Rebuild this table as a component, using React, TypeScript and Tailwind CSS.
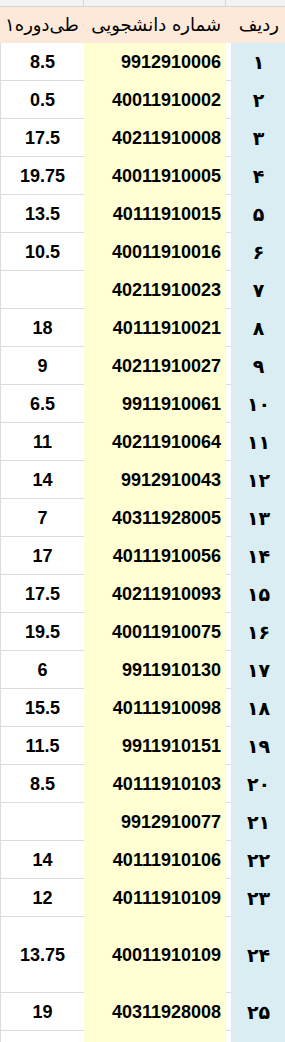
import React from "react";

const scores = ["8.5","0.5","17.5","19.75","13.5","10.5","","18","9","6.5","11","14","7","17","17.5","19.5","6","15.5","11.5","8.5","","14","12","13.75","19"];
const ids = ["9912910006","40011910002","40211910008","40011910005","40111910015","40011910016","40211910023","40111910021","40211910027","9911910061","40211910064","9912910043","40311928005","40111910056","40211910093","40011910075","9911910130","40111910098","9911910151","40111910103","9912910077","40111910106","40111910109","40011910109","40311928008"];
const fa = (n: number) => String(n).replace(/\d/g, (d) => "۰۱۲۳۴۵۶۷۸۹"[Number(d)]);

export default function App() {
  return (
    <div className="w-[285px] h-[1042px] overflow-hidden bg-white text-black" style={{ fontFamily: '"Liberation Sans", Arial, sans-serif' }}>
      {/* top strip */}
      <div className="grid grid-cols-[84px_142px_5px_54px] h-[7px] bg-[#f3f3f3] border-b border-[#d4d4d4]">
        <div className="border-r border-[#d4d4d4]" />
        <div className="border-r border-[#d4d4d4]" />
        <div />
        <div />
      </div>
      {/* header */}
      <div className="grid grid-cols-[84px_142px_5px_54px] h-[36px] bg-[#fce9da] text-[18px] leading-none" style={{ fontFamily: '"DejaVu Sans", sans-serif' }}>
        <div className="flex items-center justify-center" dir="rtl">طی‌دوره۱</div>
        <div className="flex items-center justify-end pr-[5px]" dir="ltr"><span dir="rtl">شماره دانشجویی</span></div>
        <div />
        <div className="flex items-center justify-end pr-[6px]" dir="ltr"><span dir="rtl">ردیف</span></div>
      </div>
      {ids.map((id, i) => {
        const h = i === 23 ? "h-[76px]" : "h-[38px]";
        return (
          <div key={i} className={`grid grid-cols-[84px_142px_5px_54px] ${h}`}>
            <div className="flex items-center justify-center border-b border-l border-[#dcdcdc] font-bold text-[18px] pt-[1px]">{scores[i]}</div>
            <div className="flex items-center justify-end pr-[5px] bg-[#ffffd3] font-bold text-[18px] pt-[1px]">{id}</div>
            <div className="border-b border-[#dcdcdc]" />
            <div className="flex items-center justify-center bg-[#daedf3] font-bold text-[19px] pl-[1px]" style={{ fontFamily: '"DejaVu Sans", sans-serif' }}>{fa(i + 1)}</div>
          </div>
        );
      })}
      <div className="grid grid-cols-[84px_142px_5px_54px] h-[38px]">
        <div className="border-l border-[#dcdcdc]" />
        <div className="bg-[#ffffd3]" />
        <div />
        <div className="bg-[#daedf3]" />
      </div>
    </div>
  );
}
